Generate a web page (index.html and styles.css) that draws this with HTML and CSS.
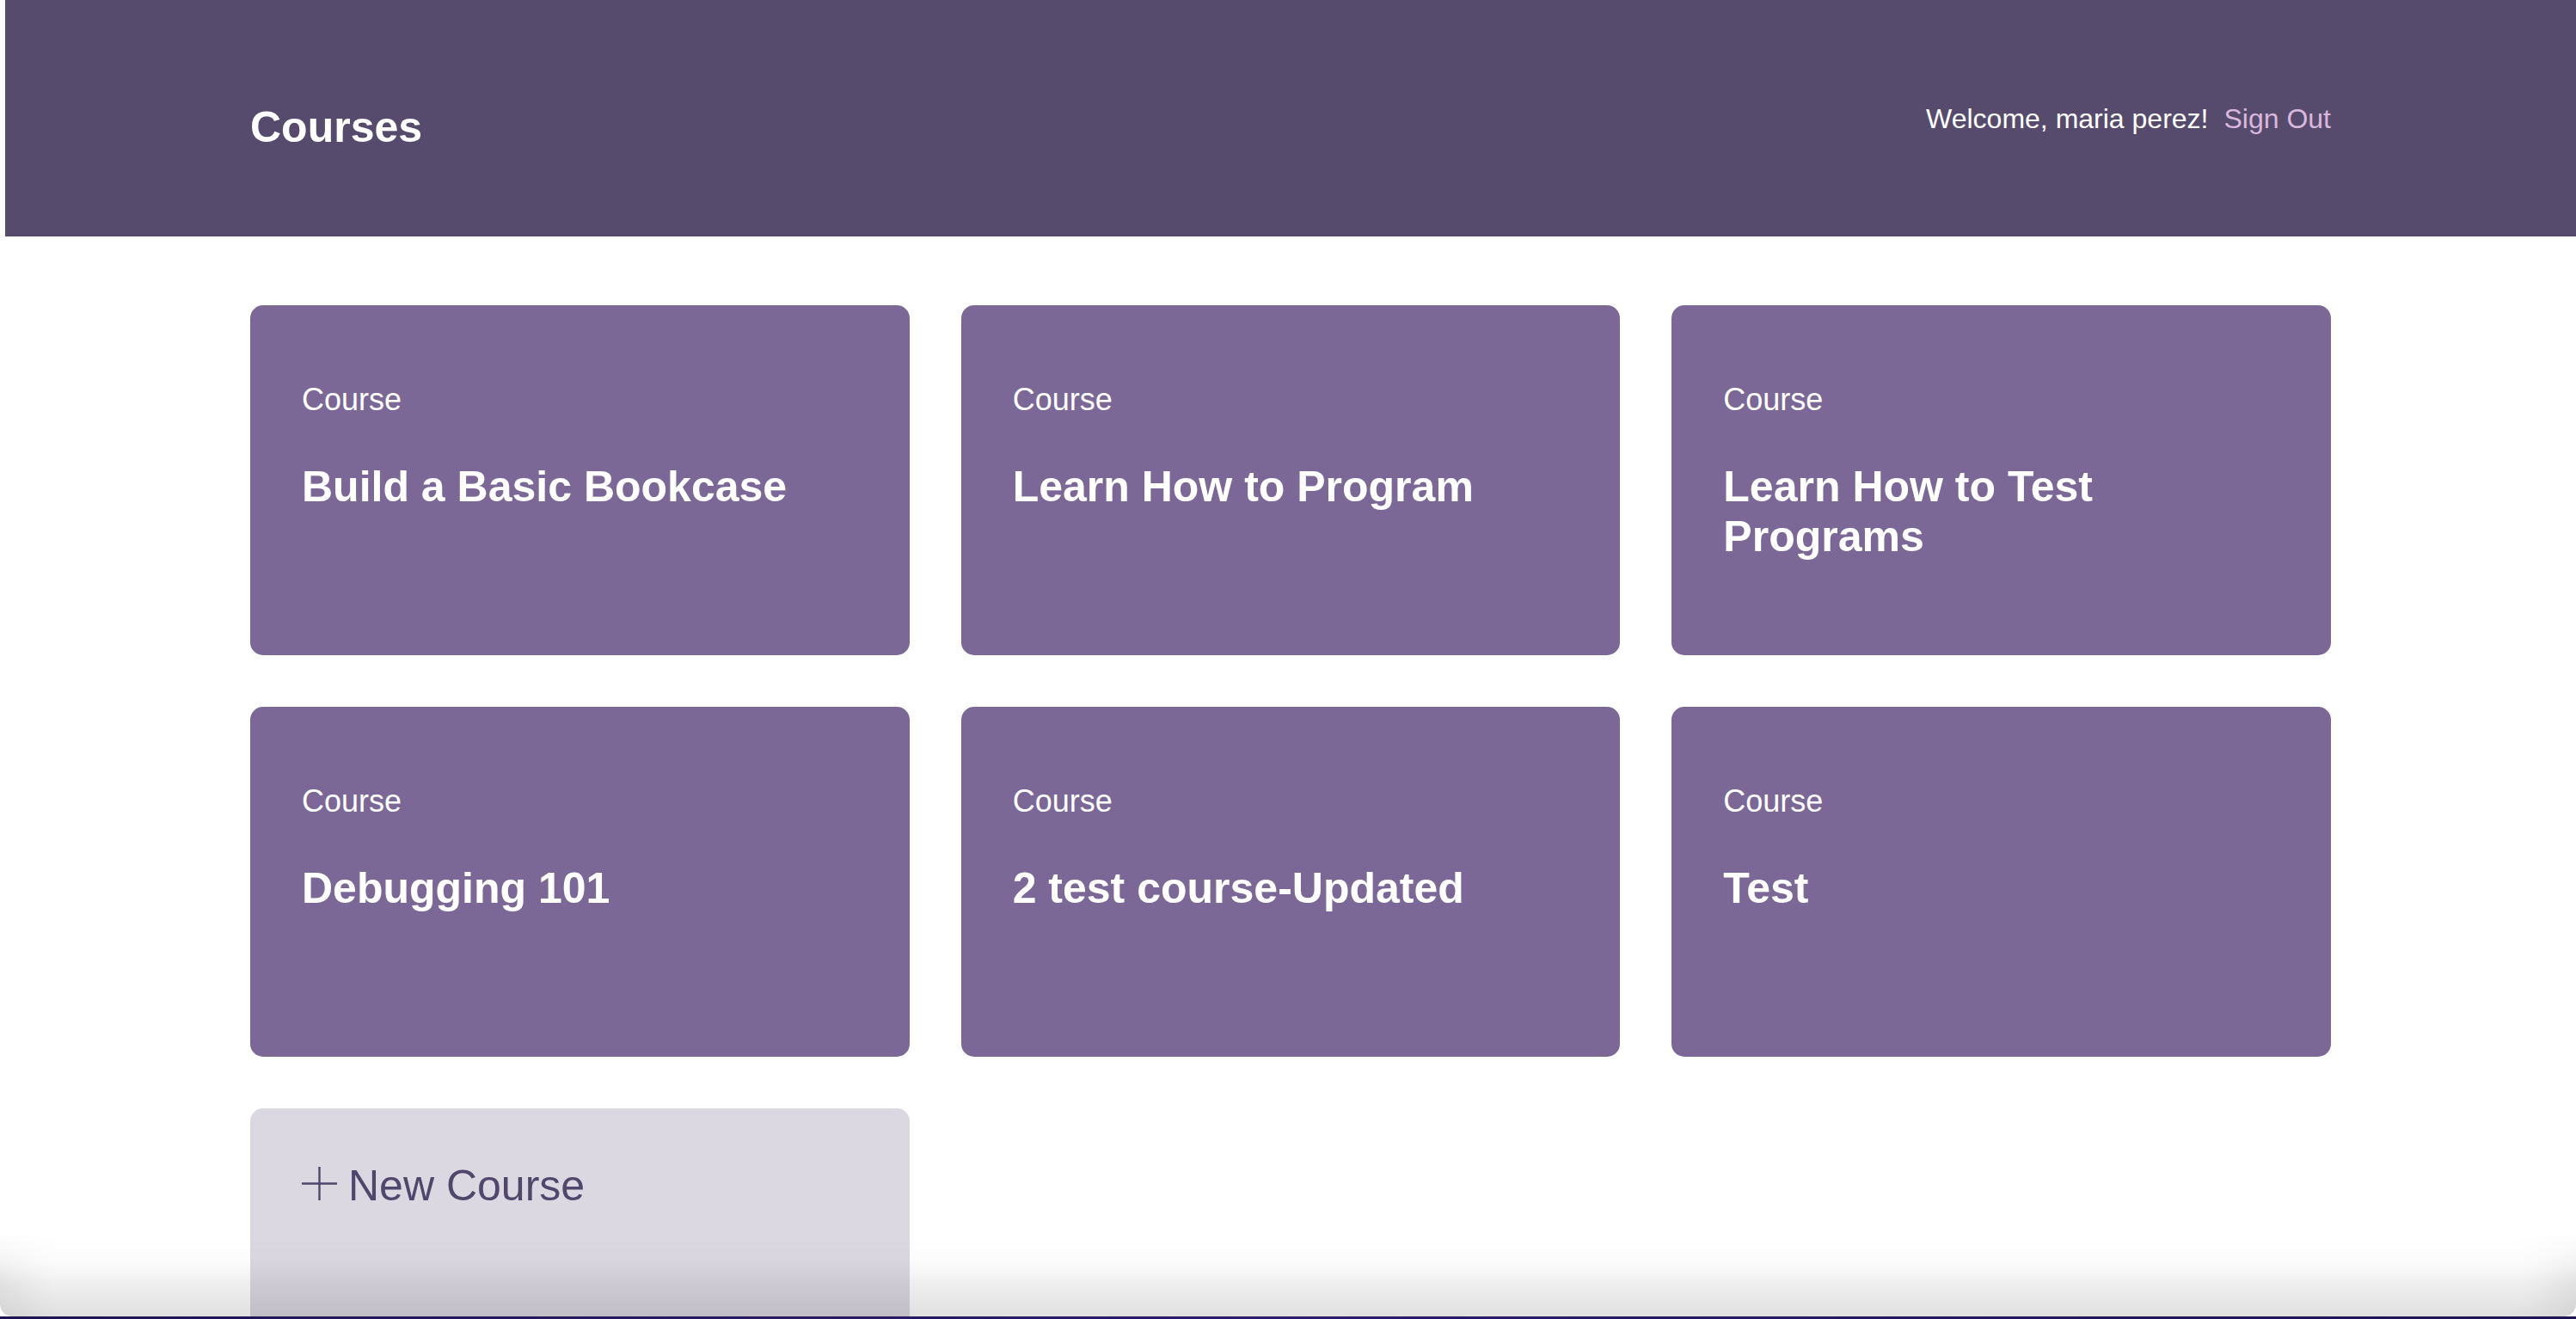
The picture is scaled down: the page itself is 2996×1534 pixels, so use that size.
FILE: index.html
```html
<!DOCTYPE html>
<html lang="en">
<head>
<meta charset="utf-8">
<title>Courses</title>
<link rel="stylesheet" href="styles.css">
</head>
<body>
<div class="app">
  <header class="header">
    <div class="header-inner">
      <h1 class="brand">Courses</h1>
      <div class="user">
        <span class="welcome">Welcome, maria perez!</span>
        <a class="signout" href="#">Sign Out</a>
      </div>
    </div>
  </header>
  <main class="grid">
    <a class="card" href="#">
      <span class="card-label">Course</span>
      <h3 class="card-title">Build a Basic Bookcase</h3>
    </a>
    <a class="card" href="#">
      <span class="card-label">Course</span>
      <h3 class="card-title">Learn How to Program</h3>
    </a>
    <a class="card" href="#">
      <span class="card-label">Course</span>
      <h3 class="card-title">Learn How to Test Programs</h3>
    </a>
    <a class="card" href="#">
      <span class="card-label">Course</span>
      <h3 class="card-title">Debugging 101</h3>
    </a>
    <a class="card" href="#">
      <span class="card-label">Course</span>
      <h3 class="card-title">2 test course-Updated</h3>
    </a>
    <a class="card" href="#">
      <span class="card-label">Course</span>
      <h3 class="card-title">Test</h3>
    </a>
    <a class="card card-new" href="#">
      <span class="new-title">
        <svg class="plus" viewBox="0 0 41 39" width="41" height="39" aria-hidden="true">
          <path d="M20.5 0 V39 M0 19.5 H41" stroke="#51466b" stroke-width="2.4" fill="none"/>
        </svg>New Course
      </span>
    </a>
  </main>
</div>
<div class="vignette"></div>
<div class="desk-edge"></div>
</body>
</html>
```
FILE: styles.css
```css
html {
  overflow: hidden;
}
body {
  margin: 0;
  background: #ffffff;
  font-family: "Liberation Sans", Arial, Helvetica, sans-serif;
}
.app {
  padding-left: 6px;
}
.header {
  background: #564b6c;
  height: 275px;
}
.header-inner {
  width: 2420px;
  margin: 0 auto;
  padding-top: 119px;
  display: flex;
  justify-content: space-between;
  align-items: flex-start;
}
.brand {
  margin: 0;
  font-size: 50px;
  line-height: 58px;
  font-weight: bold;
  color: #ffffff;
}
.user {
  margin-top: 1px;
  font-size: 32px;
  line-height: 37px;
  display: flex;
}
.welcome {
  color: #ffffff;
}
.signout {
  margin-left: 18px;
  color: #dab7dc;
  text-decoration: none;
}
.grid {
  width: 2420px;
  margin: 80px auto 0;
  display: grid;
  grid-template-columns: repeat(3, 1fr);
  grid-auto-rows: 407px;
  gap: 60px;
}
.card {
  display: flex;
  flex-direction: column;
  background: #7b6896;
  border-radius: 15px;
  padding: 89px 60px 60px;
  color: #ffffff;
  text-decoration: none;
  box-sizing: border-box;
}
.card-label {
  font-size: 36px;
  line-height: 42px;
}
.card-title {
  margin: 51px 0 0;
  font-size: 50px;
  line-height: 58px;
  font-weight: bold;
}
.card-new {
  background: #dbd8e2;
  padding-top: 61px;
}
.new-title {
  display: flex;
  align-items: center;
  font-size: 50px;
  line-height: 58px;
  color: #51466b;
}
.plus {
  margin-right: 13px;
  margin-top: -5px;
}
.vignette {
  position: fixed;
  left: 0;
  right: 0;
  bottom: 3px;
  height: 100px;
  pointer-events: none;
  background: linear-gradient(to bottom, rgba(0,0,0,0), rgba(0,0,0,0.03) 40%, rgba(0,0,0,0.12));
  box-shadow: inset 60px 0 60px -40px rgba(0,0,0,0.08), inset -60px 0 60px -40px rgba(0,0,0,0.08);
  -webkit-mask-image: linear-gradient(to bottom, transparent, #000 60%);
  mask-image: linear-gradient(to bottom, transparent, #000 60%);
  border-radius: 0 0 14px 14px;
}
.desk-edge {
  position: fixed;
  left: 0;
  right: 0;
  bottom: 0;
  height: 3px;
  background: linear-gradient(90deg, #1d1450, #2d1a68 50%, #1d1450);
}
```
